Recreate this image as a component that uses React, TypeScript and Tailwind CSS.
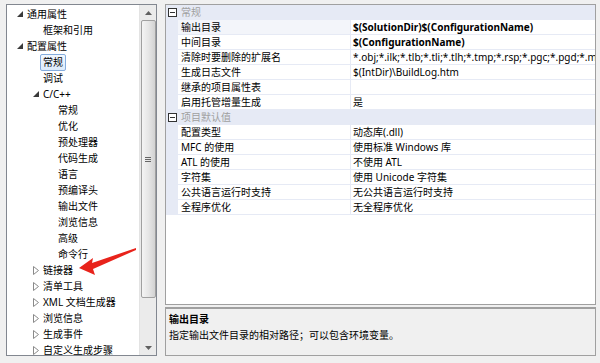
import React from "react";

const FONT = { fontFamily: '"Noto Sans", "Noto Sans CJK SC", sans-serif' };

type Node = { label: string; level: number; exp?: "open" | "closed"; selected?: boolean };

const tree: Node[] = [
  { label: "通用属性", level: 0, exp: "open" },
  { label: "框架和引用", level: 1 },
  { label: "配置属性", level: 0, exp: "open" },
  { label: "常规", level: 1, selected: true },
  { label: "调试", level: 1 },
  { label: "C/C++", level: 1, exp: "open" },
  { label: "常规", level: 2 },
  { label: "优化", level: 2 },
  { label: "预处理器", level: 2 },
  { label: "代码生成", level: 2 },
  { label: "语言", level: 2 },
  { label: "预编译头", level: 2 },
  { label: "输出文件", level: 2 },
  { label: "浏览信息", level: 2 },
  { label: "高级", level: 2 },
  { label: "命令行", level: 2 },
  { label: "链接器", level: 1, exp: "closed" },
  { label: "清单工具", level: 1, exp: "closed" },
  { label: "XML 文档生成器", level: 1, exp: "closed" },
  { label: "浏览信息", level: 1, exp: "closed" },
  { label: "生成事件", level: 1, exp: "closed" },
  { label: "自定义生成步骤", level: 1, exp: "closed" },
];

function Expander({ kind }: { kind?: "open" | "closed" }) {
  if (kind === "open")
    return (
      <svg width="6" height="6" viewBox="0 0 6 6" className="shrink-0">
        <polygon points="6,0 6,6 0,6" fill="#3a3a3a" />
      </svg>
    );
  if (kind === "closed")
    return (
      <svg width="6" height="9" viewBox="0 0 6 9" className="shrink-0">
        <polygon points="0.5,0.5 5.5,4.5 0.5,8.5" fill="none" stroke="#8a8a8a" strokeWidth="1" />
      </svg>
    );
  return <span className="w-[6px] shrink-0" />;
}

function TreeRow({ n }: { n: Node }) {
  const indent = n.level === 0 ? "pl-[10px]" : n.level === 1 ? "pl-[26px]" : "pl-[41px]";
  return (
    <div className={`flex items-center h-[16px] ${indent}`}>
      <div className="w-[10px] shrink-0 flex items-center">
        <Expander kind={n.exp} />
      </div>
      {n.selected ? (
        <span className="ml-[-3px] px-[2px] h-[17px] leading-[15px] border border-[#84acdd] rounded-[2px] bg-gradient-to-b from-[#f2f8fe] to-[#dcebfc] text-black whitespace-nowrap">
          {n.label}
        </span>
      ) : (
        <span className="leading-[16px] text-black whitespace-nowrap">{n.label}</span>
      )}
    </div>
  );
}

function Scrollbar() {
  return (
    <div className="w-[17px] shrink-0 h-full bg-[#ebebeb] border-l border-[#e3e3e3] flex flex-col items-center">
      <div className="h-[15px] w-full flex items-center justify-center">
        <svg width="7" height="4" viewBox="0 0 7 4"><polygon points="0,4 3.5,0 7,4" fill="#606060" /></svg>
      </div>
      <div className="h-[278px] w-[15px] rounded-[2px] border border-[#a0a0a0] bg-gradient-to-r from-[#f4f4f4] via-[#e6e6e6] to-[#d2d2d2] flex items-center justify-center">
        <div className="flex flex-col gap-[1px]">
          <div className="w-[6px] h-[1px] bg-[#666]" />
          <div className="w-[6px] h-[1px] bg-[#666]" />
          <div className="w-[6px] h-[1px] bg-[#666]" />
        </div>
      </div>
      <div className="flex-1" />
      <div className="h-[15px] w-full flex items-center justify-center">
        <svg width="7" height="4" viewBox="0 0 7 4"><polygon points="0,0 7,0 3.5,4" fill="#606060" /></svg>
      </div>
    </div>
  );
}

type Row = { name: string; value: string; bold?: boolean; sel?: boolean };

const sec1: Row[] = [
  { name: "输出目录", value: "$(SolutionDir)$(ConfigurationName)", bold: true, sel: true },
  { name: "中间目录", value: "$(ConfigurationName)", bold: true },
  { name: "清除时要删除的扩展名", value: "*.obj;*.ilk;*.tlb;*.tli;*.tlh;*.tmp;*.rsp;*.pgc;*.pgd;*.meta;$(TargetPath)" },
  { name: "生成日志文件", value: "$(IntDir)\\BuildLog.htm" },
  { name: "继承的项目属性表", value: "" },
  { name: "启用托管增量生成", value: "是" },
];
const sec2: Row[] = [
  { name: "配置类型", value: "动态库(.dll)" },
  { name: "MFC 的使用", value: "使用标准 Windows 库" },
  { name: "ATL 的使用", value: "不使用 ATL" },
  { name: "字符集", value: "使用 Unicode 字符集" },
  { name: "公共语言运行时支持", value: "无公共语言运行时支持" },
  { name: "全程序优化", value: "无全程序优化" },
];

function Category({ title }: { title: string }) {
  return (
    <div className="flex items-center h-[15px] bg-[#e6eaf5]">
      <div className="w-[12px] shrink-0 flex items-center justify-center">
        <svg width="9" height="9" viewBox="0 0 9 9">
          <rect x="0.5" y="0.5" width="8" height="8" fill="white" stroke="#333" />
          <line x1="2" y1="4.5" x2="7" y2="4.5" stroke="#333" />
        </svg>
      </div>
      <span className="ml-[3px] text-[#a0a0a0] leading-[15px]">{title}</span>
    </div>
  );
}

function PropRow({ r }: { r: Row }) {
  return (
    <div className="flex h-[15px] border-b border-[#e6eaf5]">
      <div className="w-[12px] bg-[#e6eaf5] shrink-0" />
      <div className={`w-[173px] shrink-0 pl-[3px] leading-[14px] whitespace-nowrap overflow-hidden border-r border-[#e6eaf5] ${r.sel ? "bg-[#f3f5fa]" : ""}`}>
        {r.name}
      </div>
      <div className={`flex-1 pl-[2px] leading-[14px] whitespace-nowrap overflow-hidden ${r.bold ? "font-bold" : ""}`}>
        {r.value}
      </div>
    </div>
  );
}

export default function App() {
  return (
    <div className="w-[600px] h-[363px] bg-[#f0f0f0] relative overflow-hidden text-[10px] text-black" style={FONT}>
      <div className="flex h-full pt-[4px] pb-[7px] pl-[6px] pr-[4px] gap-[8px]">
        {/* Tree */}
        <div className="w-[151px] shrink-0 h-full border border-[#828790] bg-white flex overflow-hidden">
          <div className="flex-1 min-w-0 pt-[1px] overflow-hidden">
            {tree.map((n, i) => (
              <TreeRow key={i} n={n} />
            ))}
          </div>
          <Scrollbar />
        </div>
        {/* Right */}
        <div className="flex-1 min-w-0 flex flex-col gap-[2px]">
          <div className="flex-1 border border-[#a0a0a0] bg-white overflow-hidden">
            <Category title="常规" />
            {sec1.map((r, i) => (
              <PropRow key={i} r={r} />
            ))}
            <Category title="项目默认值" />
            {sec2.map((r, i) => (
              <PropRow key={i} r={r} />
            ))}
          </div>
          <div className="h-[49px] border border-[#a0a0a0] border-t-[2px] bg-[#f0f0f0] px-[3px] pt-[2px]">
            <div className="font-bold leading-[16px]">输出目录</div>
            <div className="leading-[16px]">指定输出文件目录的相对路径；可以包含环境变量。</div>
          </div>
        </div>
      </div>
      {/* red arrow annotation */}
      <svg className="absolute left-0 top-0 pointer-events-none" width="600" height="363">
        <polygon points="136,248 92,263 93,258 79,268 95,275 93,269 136,250" fill="#e8231b" />
      </svg>
    </div>
  );
}
